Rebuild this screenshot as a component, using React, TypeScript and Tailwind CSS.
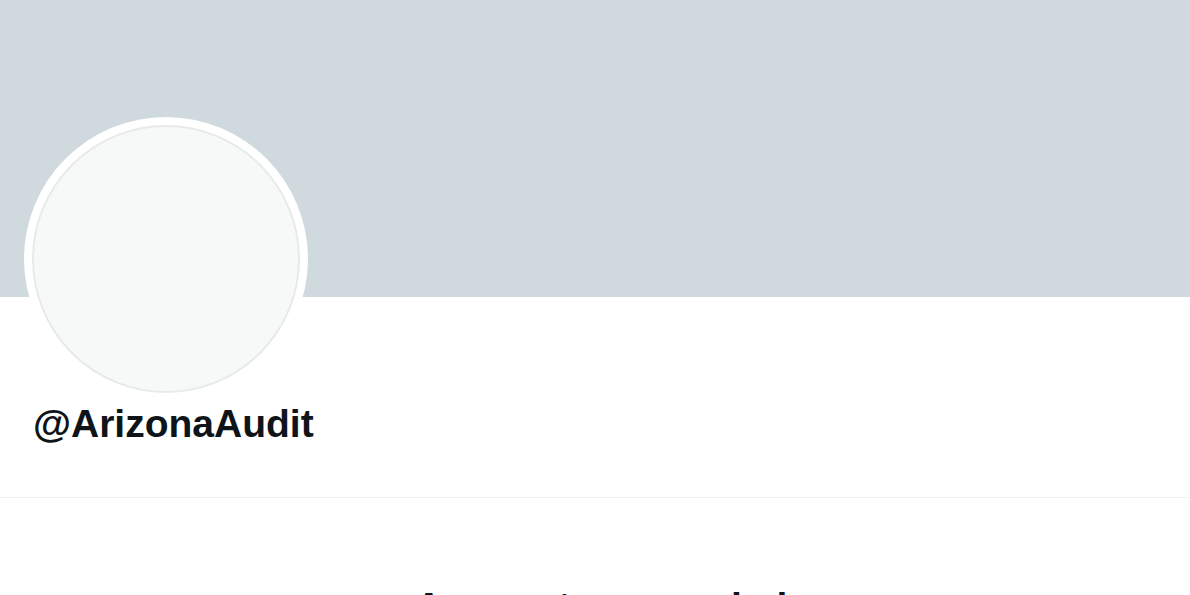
export default function App() {
  return (
    <div className="min-h-screen w-full bg-white text-[#0f1419]" style={{ fontFamily: '"Liberation Sans", Arial, sans-serif' }}>
      {/* banner */}
      <div className="h-[297px] w-full bg-[#cfd9de]" />

      {/* avatar + handle */}
      <div className="border-b border-[#eff3f4] px-[24px] pb-[51px]">
        <div className="-mt-[180px] h-[284px] w-[284px] rounded-full bg-white p-[8px]">
          <div className="h-full w-full rounded-full border-2 border-[#e7eaeb] bg-[#f7f9f9]" />
        </div>
        <h2 className="pl-[9px] pt-[1px] text-[39px] font-bold leading-[44px]">@ArizonaAudit</h2>
      </div>

      {/* suspended notice */}
      <div className="flex flex-col items-center pl-[12px] pt-[87px]">
        <h1 className="text-[39px] font-bold leading-[44px]">Account suspended</h1>
      </div>
    </div>
  )
}
